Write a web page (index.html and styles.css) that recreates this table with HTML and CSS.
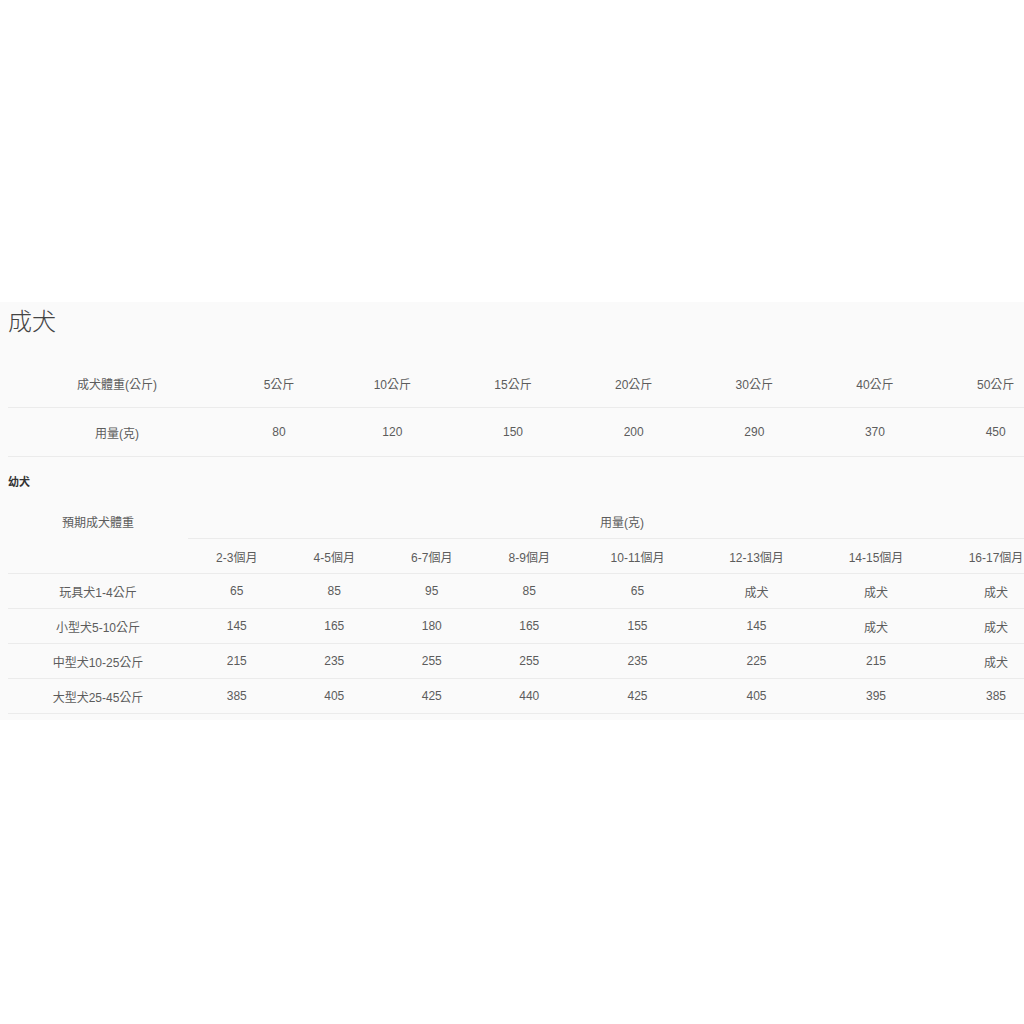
FILE: index.html
```html
<!DOCTYPE html>
<html lang="zh-Hant">
<head>
<meta charset="utf-8">
<title>餵食建議</title>
<link rel="stylesheet" href="styles.css">
</head>
<body>
<div class="panel">
  <h2 class="title">成犬</h2>
  <table class="grid adult">
    <colgroup>
      <col class="c-lead"><col class="c-a2"><col class="c-a"><col class="c-a"><col class="c-a"><col class="c-a"><col class="c-a"><col class="c-a">
    </colgroup>
    <tr><th>成犬體重(公斤)</th><th>5公斤</th><th>10公斤</th><th>15公斤</th><th>20公斤</th><th>30公斤</th><th>40公斤</th><th>50公斤</th></tr>
    <tr><td>用量(克)</td><td>80</td><td>120</td><td>150</td><td>200</td><td>290</td><td>370</td><td>450</td></tr>
  </table>
  <h3 class="subtitle">幼犬</h3>
  <table class="grid puppy">
    <colgroup>
      <col class="c-plead"><col class="c-p"><col class="c-p"><col class="c-p"><col class="c-p"><col class="c-q"><col class="c-q"><col class="c-r"><col class="c-r">
    </colgroup>
    <tr class="top"><th class="noline">預期成犬體重</th><th colspan="8">用量(克)</th></tr>
    <tr><th></th><th>2-3個月</th><th>4-5個月</th><th>6-7個月</th><th>8-9個月</th><th>10-11個月</th><th>12-13個月</th><th>14-15個月</th><th>16-17個月</th></tr>
    <tr><td>玩具犬1-4公斤</td><td>65</td><td>85</td><td>95</td><td>85</td><td>65</td><td>成犬</td><td>成犬</td><td>成犬</td></tr>
    <tr><td>小型犬5-10公斤</td><td>145</td><td>165</td><td>180</td><td>165</td><td>155</td><td>145</td><td>成犬</td><td>成犬</td></tr>
    <tr><td>中型犬10-25公斤</td><td>215</td><td>235</td><td>255</td><td>255</td><td>235</td><td>225</td><td>215</td><td>成犬</td></tr>
    <tr><td>大型犬25-45公斤</td><td>385</td><td>405</td><td>425</td><td>440</td><td>425</td><td>405</td><td>395</td><td>385</td></tr>
  </table>
</div>
</body>
</html>
```
FILE: styles.css
```css
html, body {
  margin: 0;
  padding: 0;
  background: #ffffff;
  overflow-x: hidden;
}
body {
  font-family: "Liberation Sans", "Noto Sans CJK TC", sans-serif;
  color: #5c5c5c;
}
.panel {
  margin-top: 302px;
  background: #fafafa;
  padding: 0 0 6px 8px;
  overflow: hidden;
}
.title {
  margin: 0 0 17px 0;
  font-size: 24px;
  line-height: 40px;
  font-weight: 300;
  color: #444444;
}
.subtitle {
  margin: 15px 0 12px 0;
  font-size: 11px;
  line-height: 20px;
  font-weight: bold;
  color: #333333;
}
.grid {
  border-collapse: collapse;
  table-layout: fixed;
  font-size: 12px;
}
.grid th, .grid td {
  padding: 0;
  text-align: center;
  font-weight: normal;
  border-bottom: 1px solid #ebebeb;
  white-space: nowrap;
}
.adult { width: 1048px; }
.adult th, .adult td { height: 48px; }
.c-lead { width: 218px; }
.c-a2 { width: 106px; }
.c-a { width: 120.66px; }
.puppy { width: 1048px; }
.puppy th, .puppy td { height: 34px; }
.puppy .noline { border-bottom-color: transparent; }
.c-plead { width: 180px; }
.c-p { width: 97.5px; }
.c-q { width: 119px; }
.c-r { width: 120px; }
```
